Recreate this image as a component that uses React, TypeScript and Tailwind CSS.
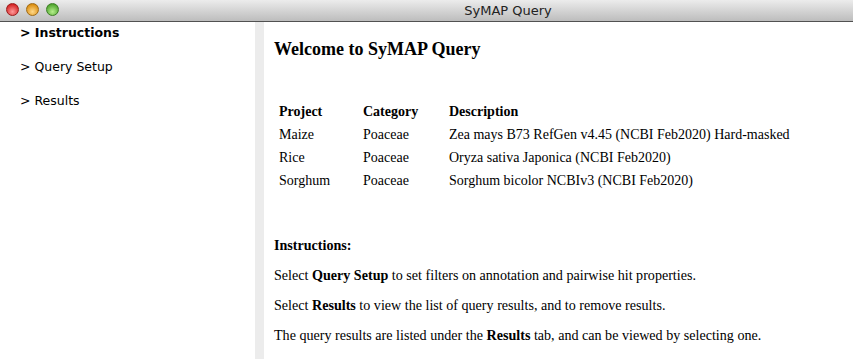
import React from "react";

function Light({ from, to, border }: { from: string; to: string; border: string }) {
  return (
    <div
      className="w-[13px] h-[13px] rounded-full"
      style={{
        background: `radial-gradient(circle at 50% 70%, ${to} 0%, ${from} 80%)`,
        border: `1px solid ${border}`,
      }}
    />
  );
}

export default function App() {
  const serif = { fontFamily: '"Liberation Serif", "Times New Roman", serif' };
  const sans = { fontFamily: '"DejaVu Sans", "Lucida Grande", sans-serif' };
  const rows = [
    ["Maize", "Poaceae", "Zea mays B73 RefGen v4.45 (NCBI Feb2020) Hard-masked"],
    ["Rice", "Poaceae", "Oryza sativa Japonica (NCBI Feb2020)"],
    ["Sorghum", "Poaceae", "Sorghum bicolor NCBIv3 (NCBI Feb2020)"],
  ];
  return (
    <div className="w-[853px] h-[359px] overflow-hidden bg-white flex flex-col">
      <div className="h-[22px] shrink-0 relative bg-gradient-to-b from-[#ececec] to-[#bdbdbd] border-b border-[#515151] overflow-hidden">
        <div className="absolute left-[6px] top-[3px] flex gap-[7px]">
          <Light from="#d21f1f" to="#ff9a9a" border="#9a1b1b" />
          <Light from="#d98b0c" to="#ffd98a" border="#a06a14" />
          <Light from="#4ca22a" to="#b6ef8d" border="#3c7d25" />
        </div>
        <div className="w-[1016px] h-full flex items-center justify-center text-[13px] text-[#222]" style={sans}>
          SyMAP Query
        </div>
      </div>
      <div className="flex flex-1 min-h-0">
        <div className="w-[255px] shrink-0 bg-white pl-[20px] pt-[2px] text-[12.5px] text-black" style={sans}>
          <div className="h-[34px] leading-[18px] font-bold">&gt; Instructions</div>
          <div className="h-[34px] leading-[18px]">&gt; Query Setup</div>
          <div className="h-[34px] leading-[18px]">&gt; Results</div>
        </div>
        <div className="w-[9px] shrink-0 bg-[#ececec]" />
        <div className="flex-1 pl-[10px] text-black" style={serif}>
          <div className="mt-[16px] text-[18px] font-bold leading-[22px]">Welcome to SyMAP Query</div>
          <table className="mt-[40px] ml-[3px] text-[14px] border-separate border-spacing-x-[2px] border-spacing-y-0">
            <thead>
              <tr className="h-[23px]">
                <th className="text-left font-bold w-[82px] pl-0">Project</th>
                <th className="text-left font-bold w-[84px]">Category</th>
                <th className="text-left font-bold">Description</th>
              </tr>
            </thead>
            <tbody>
              {rows.map((r) => (
                <tr key={r[0]} className="h-[23px]">
                  <td>{r[0]}</td>
                  <td>{r[1]}</td>
                  <td>{r[2]}</td>
                </tr>
              ))}
            </tbody>
          </table>
          <div className="mt-[38px] text-[14.1px] leading-[30px]">
            <div className="font-bold">Instructions:</div>
            <div>
              Select <b>Query Setup</b> to set filters on annotation and pairwise hit properties.
            </div>
            <div>
              Select <b>Results</b> to view the list of query results, and to remove results.
            </div>
            <div>
              The query results are listed under the <b>Results</b> tab, and can be viewed by selecting one.
            </div>
          </div>
        </div>
      </div>
    </div>
  );
}
